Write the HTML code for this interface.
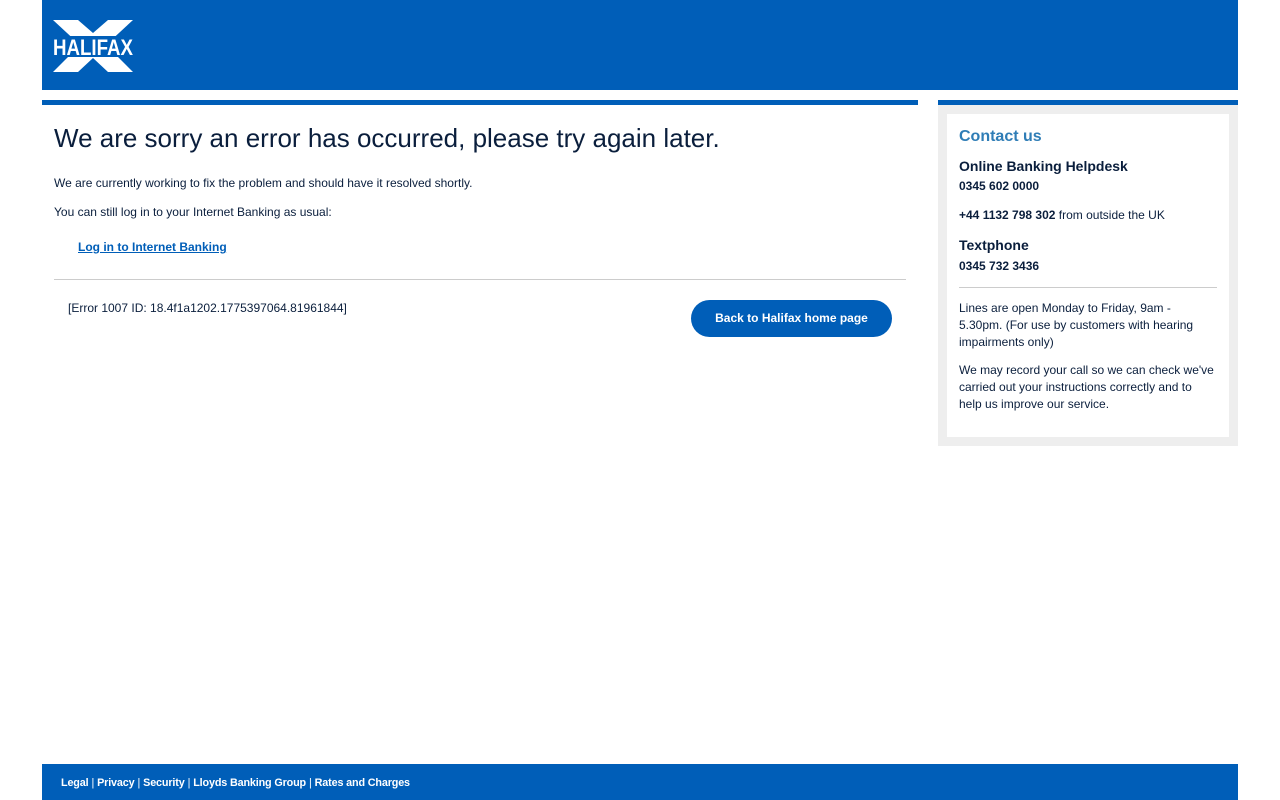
<!DOCTYPE html>
<html><head><meta charset="utf-8"><style>
*{margin:0;padding:0;box-sizing:border-box}
body{width:1280px;height:800px;background:#fff;font-family:"Liberation Sans",Arial,sans-serif;color:#0a1e3c;position:relative;overflow:hidden}
.hdr{position:absolute;left:42px;top:0;width:1196px;height:90px;background:#005eb8}
.main{position:absolute;left:42px;top:100px;width:876px;border-top:5px solid #005eb8}
h1{position:absolute;left:12px;top:18px;font-size:26px;font-weight:normal;color:#0a1e3c;white-space:nowrap}
.p{position:absolute;left:12px;font-size:12px;color:#0a1e3c}
.lnk{position:absolute;left:36px;top:135px;font-size:12px;font-weight:bold;color:#005eb8;text-decoration:underline}
.hr{position:absolute;left:12px;top:174px;width:852px;height:1px;background:#ccc}
.btn{position:absolute;left:649px;top:195px;width:201px;height:37px;border-radius:19px;background:#005eb8;color:#fff;font-size:12px;font-weight:bold;text-align:center;line-height:37px}
.side{position:absolute;left:938px;top:100px;width:300px;height:346px;background:#eee;border-top:5px solid #005eb8}
.inner{position:absolute;left:9px;top:9px;width:282px;height:323px;background:#fff;padding:0 12px}
.side .t{position:absolute;left:12px;font-size:12px;color:#0a1e3c;white-space:nowrap}
.foot{position:absolute;left:42px;top:764px;width:1196px;height:36px;background:#005eb8;color:#fff;font-size:10.8px;font-weight:bold;padding:13px 0 0 19px;letter-spacing:-0.15px}
.foot span{font-weight:normal;margin:0 3px}
</style></head><body>
<div class="hdr">
<svg width="100" height="90" style="position:absolute;left:0;top:0">
<polygon points="11,20 36,20 51,33 66,20 91,20 64,45 91,72 66,72 51,58 36,72 11,72 38,45" fill="#fff"/>
<rect x="9" y="36" width="84" height="21" fill="#005eb8"/>
<text x="51" y="55" text-anchor="middle" font-family="Liberation Sans,Arial" font-weight="bold" font-size="22" fill="#fff" textLength="80" lengthAdjust="spacingAndGlyphs">HALIFAX</text>
</svg>
</div>
<div class="main">
<h1>We are sorry an error has occurred, please try again later.</h1>
<div class="p" style="top:71px">We are currently working to fix the problem and should have it resolved shortly.</div>
<div class="p" style="top:100px">You can still log in to your Internet Banking as usual:</div>
<div class="lnk">Log in to Internet Banking</div>
<div class="hr"></div>
<div class="p" style="left:26px;top:196px">[Error 1007 ID: 18.4f1a1202.1775397064.81961844]</div>
<div class="btn">Back to Halifax home page</div>
</div>
<div class="side"><div class="inner">
<div class="t" style="top:14px;font-size:16px;font-weight:bold;color:#2f7db6">Contact us</div>
<div class="t" style="top:44px;font-size:14px;font-weight:bold">Online Banking Helpdesk</div>
<div class="t" style="top:65px;font-weight:bold">0345 602 0000</div>
<div class="t" style="top:94px"><b>+44 1132 798 302</b> from outside the UK</div>
<div class="t" style="top:123px;font-size:14px;font-weight:bold">Textphone</div>
<div class="t" style="top:145px;font-weight:bold">0345 732 3436</div>
<div style="position:absolute;left:12px;top:173px;width:258px;height:1px;background:#ccc"></div>
<div class="t" style="top:186px;white-space:normal;width:250px;line-height:17px">Lines are open Monday to Friday, 9am - 5.30pm. (For use by customers with hearing impairments only)</div>
<div class="t" style="top:248px;white-space:normal;width:258px;line-height:17px">We may record your call so we can check we've carried out your instructions correctly and to help us improve our service.</div>
</div></div>
<div class="foot">Legal<span>|</span>Privacy<span>|</span>Security<span>|</span>Lloyds Banking Group<span>|</span>Rates and Charges</div>
</body></html>
